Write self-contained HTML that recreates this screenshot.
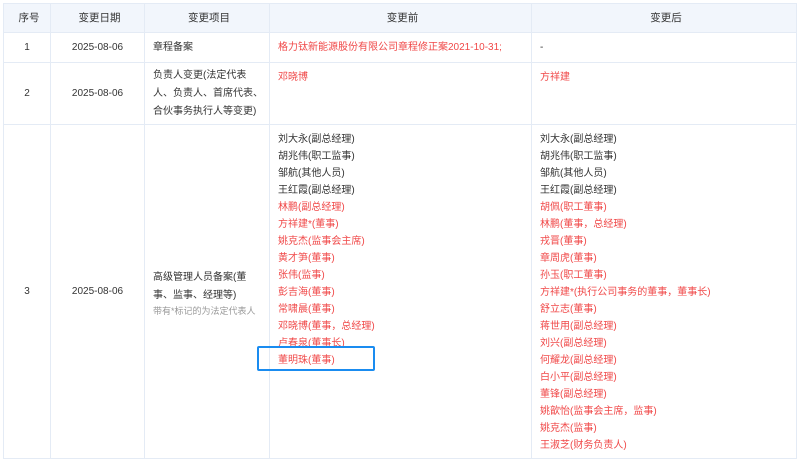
<!DOCTYPE html>
<html><head><meta charset="utf-8"><style>
body{margin:0;width:800px;height:463px;background:#fff;overflow:hidden;font-family:"Liberation Sans","Noto Sans CJK SC",sans-serif;font-size:10px;color:#333;position:relative}
table{position:absolute;left:3px;top:3px;border-collapse:collapse;table-layout:fixed;width:793px}
td,th{border:1px solid #e4ebf5;padding:0 4px 0 8px;line-height:17px;vertical-align:middle;overflow:hidden}
th{background:#f2f6fc;font-weight:normal;height:28px;text-align:center;font-size:10.5px}
.c{text-align:center;padding:0}
.top{vertical-align:top;padding-top:6px;white-space:nowrap}
.r{color:#f04848}
.g{color:#999;font-size:9px;line-height:13px;white-space:nowrap}
.box{position:absolute;left:257px;top:346px;width:114px;height:21px;border:2px solid #1a8cf0;border-radius:2px}
</style></head><body>
<table>
<colgroup><col style="width:47px"><col style="width:94px"><col style="width:125px"><col style="width:262px"><col style="width:265px"></colgroup>
<tr><th>序号</th><th>变更日期</th><th>变更项目</th><th>变更前</th><th>变更后</th></tr>
<tr style="height:30px"><td class="c">1</td><td class="c">2025-08-06</td><td>章程备案</td><td class="r" style="white-space:nowrap">格力钛新能源股份有限公司章程修正案2021-10-31;</td><td>-</td></tr>
<tr style="height:62px"><td class="c">2</td><td class="c">2025-08-06</td><td style="line-height:18px">负责人变更(法定代表<br>人、负责人、首席代表、<br>合伙事务执行人等变更)</td><td class="top r">邓晓博</td><td class="top r">方祥建</td></tr>
<tr style="height:334px"><td class="c">3</td><td class="c">2025-08-06</td><td><div style="line-height:18px;padding-top:4px">高级管理人员备案(董<br>事、监事、经理等)</div><div class="g">带有*标记的为法定代表人</div></td>
<td class="top">刘大永(副总经理)<br>胡兆伟(职工监事)<br>邹航(其他人员)<br>王红霞(副总经理)<br><span class="r">林鹏(副总经理)<br>方祥建*(董事)<br>姚克杰(监事会主席)<br>黄才笋(董事)<br>张伟(监事)<br>彭吉海(董事)<br>常啸晨(董事)<br>邓晓博(董事，总经理)<br>卢春泉(董事长)<br>董明珠(董事)</span></td>
<td class="top">刘大永(副总经理)<br>胡兆伟(职工监事)<br>邹航(其他人员)<br>王红霞(副总经理)<br><span class="r">胡佩(职工董事)<br>林鹏(董事，总经理)<br>戎晋(董事)<br>章周虎(董事)<br>孙玉(职工董事)<br>方祥建*(执行公司事务的董事，董事长)<br>舒立志(董事)<br>蒋世用(副总经理)<br>刘兴(副总经理)<br>何耀龙(副总经理)<br>白小平(副总经理)<br>董锋(副总经理)<br>姚歆怡(监事会主席，监事)<br>姚克杰(监事)<br>王淑芝(财务负责人)</span></td></tr>
</table>
<div class="box"></div>
</body></html>
